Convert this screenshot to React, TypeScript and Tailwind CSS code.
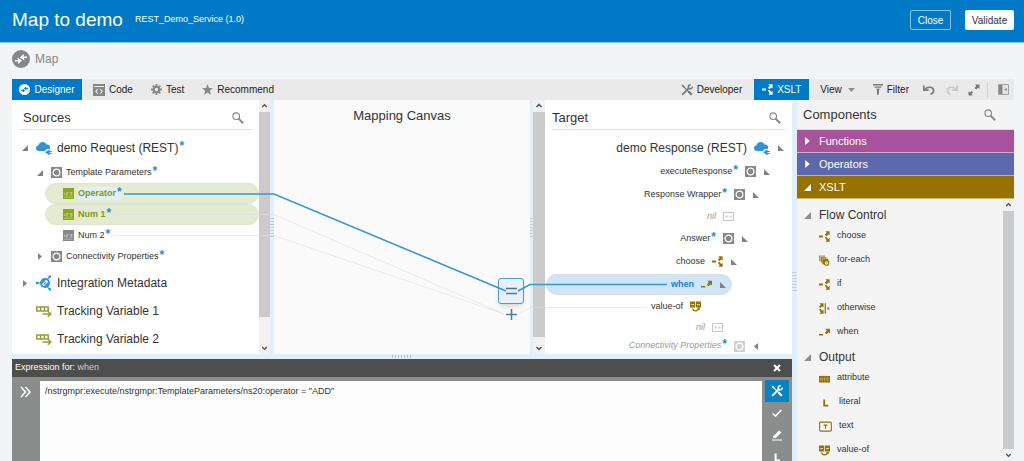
import type { ReactNode } from 'react';
import clsx from 'clsx';

type IconProps = { className?: string };

/* === 图标 === */
function MapIcon({ className }: IconProps) {
  return (
    <svg className={className} viewBox="0 0 18 18" fill="none" aria-hidden="true">
      <circle cx="9" cy="9" r="9" fill="currentColor" />
      <g className="fill-(--mark) stroke-(--mark)" strokeWidth="1.6">
        <path d="M3 10.8H6.5M15 7.2H11.5" />
        <path d="M5.6 7.4L10 10.6L6.4 14ZM12.4 10.6L8 7.4L11.6 4Z" stroke="none" />
      </g>
    </svg>
  );
}

function CodeIcon() {
  return (
    <svg className="h-3 w-3" viewBox="0 0 12 12" fill="none" aria-hidden="true">
      <path d="M0 0H12V12H0Z" fill="#858789" />
      <path d="M1 2.5H11" stroke="#ebebeb" />
      <path d="M4.8 5L2.8 7.3L4.8 9.6M7.2 5L9.2 7.3L7.2 9.6" stroke="#ebebeb" strokeWidth="1.1" />
    </svg>
  );
}

function GearIcon() {
  return (
    <svg className="h-[11px] w-[11px]" viewBox="0 0 12 12" fill="none" stroke="#858789" aria-hidden="true">
      <circle cx="6" cy="6" r="3" strokeWidth="2.4" />
      <path d="M6 0V2.5M6 9.5V12M0 6H2.5M9.5 6H12M1.8 1.8L3.5 3.5M8.5 8.5L10.2 10.2M10.2 1.8L8.5 3.5M3.5 8.5L1.8 10.2" strokeWidth="2" />
    </svg>
  );
}

function StarIcon() {
  return (
    <svg className="h-[11px] w-[11px]" viewBox="0 0 12 12" fill="#858789" aria-hidden="true">
      <path d="M6 0L7.6 4.3L12 4.5L8.5 7.3L9.8 11.8L6 9.2L2.2 11.8L3.5 7.3L0 4.5L4.4 4.3Z" />
    </svg>
  );
}

function ToolsIcon({ className }: IconProps) {
  return (
    <svg className={className} viewBox="0 0 12 12" fill="none" stroke="currentColor" aria-hidden="true">
      <path d="M1.2 1.2L4 4L10.6 10.6" strokeWidth="1.1" />
      <path d="M7.6 7.6L10.8 10.8" strokeWidth="2.2" />
      <path d="M0.8 0.8L3 2L3.4 3.4L2 3Z" fill="currentColor" strokeWidth="0.5" />
      <path d="M1.2 10.8L7.6 4.4" strokeWidth="1.8" />
      <path d="M9.8 0.9A2 2 0 1 0 11.3 2.5" strokeWidth="1.5" />
    </svg>
  );
}

function ChooseIcon({ className }: IconProps) {
  return (
    <svg className={className} viewBox="0 0 12 12" fill="currentColor" aria-hidden="true">
      <path d="M0 5H4.4V7H0ZM7 0.4H11.6V5L10.2 3.7L8.2 5.6L6.4 4.2L8.3 2ZM6.4 7.2L7.8 6.4L10.2 8.6L11.6 7.4V11.8H7L8.4 10.4Z" />
    </svg>
  );
}

function WhenIcon({ className }: IconProps) {
  return (
    <svg className={className} viewBox="0 0 12 12" fill="currentColor" aria-hidden="true">
      <path d="M0 7.6H4.6V9.4H0ZM7 2H12V7L10.5 5.7L8.2 7.8L6.4 6.2L8.4 3.7Z" />
    </svg>
  );
}

function OtherwiseIcon({ className }: IconProps) {
  return (
    <svg className={className} viewBox="0 0 12 12" fill="currentColor" aria-hidden="true">
      <path d="M0.6 0.4H5V4.8L3.7 3.6L1.6 5.4L0 4L2 2ZM0 7.2L1.4 6.4L3.7 8.4L5 7.2V11.6H0.6L2 10.2Z" />
      <path d="M6.2 0.2H7.5V11.8H6.2ZM9 5H11.2V7.2H9Z" />
    </svg>
  );
}

function ForEachIcon({ className }: IconProps) {
  return (
    <svg className={className} viewBox="0 0 12 12" fill="none" aria-hidden="true">
      <path d="M0 0.6H6.6V6.6H0Z" fill="#b39b4a" />
      <path d="M1.6 2.2H8.4V8.4H1.6Z" fill="currentColor" stroke="#f4f4f4" strokeWidth="0.5" />
      <path d="M3.4 4H10.4V10.4H3.4Z" fill="currentColor" stroke="#f4f4f4" strokeWidth="0.5" />
      <circle cx="8.2" cy="8.6" r="2.5" fill="#f4f4f4" stroke="currentColor" strokeWidth="1.2" />
      <path d="M8.2 7.4L9.6 8.6L8 9.6Z" fill="currentColor" />
    </svg>
  );
}

function ValueOfIcon({ className }: IconProps) {
  return (
    <svg className={className} viewBox="0 0 12 12" fill="none" aria-hidden="true">
      <path d="M0 0.6H5.6V7H0ZM6.4 0.6H12V7H6.4Z" fill="currentColor" />
      <path d="M1.2 4H4.4M7.8 4H10.8" stroke="#fff" strokeWidth="0.9" />
      <path d="M2.6 8.2C3.8 11.6 8.4 11.6 9.6 8" stroke="currentColor" strokeWidth="1.4" />
      <path d="M7.4 8.8L10.4 6.6L11 9.8Z" fill="currentColor" />
    </svg>
  );
}

function AttributeIcon({ className }: IconProps) {
  return (
    <svg className={className} viewBox="0 0 12 12" fill="none" aria-hidden="true">
      <path d="M0 3.2H12V10.4H0Z" fill="currentColor" />
      <path d="M1.5 8.5V6H3.5V8.5M5 5.5H7M6 5.5V8.5M10.5 5.5H8.5V8H10.5" stroke="#d6c78e" strokeWidth="0.7" />
    </svg>
  );
}

function LiteralIcon({ className }: IconProps) {
  return (
    <svg className={className} viewBox="0 0 12 12" fill="none" aria-hidden="true">
      <path d="M4.6 2.6V9.4H9" stroke="currentColor" strokeWidth="2" />
    </svg>
  );
}

function TextIcon({ className }: IconProps) {
  return (
    <svg className={className} viewBox="0 0 14 12" fill="none" stroke="currentColor" aria-hidden="true">
      <rect x="0.6" y="1.2" width="12.8" height="9.8" rx="1.2" strokeWidth="1.2" />
      <path d="M5 4.5H9M7 4.5V8.5" strokeWidth="1.2" />
    </svg>
  );
}

function CloudIcon() {
  return (
    <svg className="h-3.5 w-4 shrink-0" viewBox="0 0 16 14" fill="#2f93d6" aria-hidden="true">
      <path d="M3 10C1 10 0 8.8 0 7.2C0 5.6 1 4.7 2.4 4.5C2.8 2.4 4.4 1 6.6 1C8.6 1 10 2 10.6 3.6C12.6 3.4 14.2 4.6 14.2 6.4C14.2 7 14 7.5 13.6 8H10.8L8.8 10Z" />
      <path d="M9.4 10.6H10.8C11.2 9.5 12.2 8.8 13.6 8.8V10H15.8V11H13.6V12H15.8V13H13.6V14C12 14 11.2 13 10.8 12H9.4Z" />
    </svg>
  );
}

function MetadataIcon() {
  return (
    <svg className="h-4 w-4 shrink-0" viewBox="0 0 16 16" fill="none" aria-hidden="true">
      <circle cx="9" cy="8" r="5" fill="#2f93d6" />
      <path d="M1.5 8H5M11.5 4L13.6 1.8M11.5 12L13.6 14.2" stroke="#2f93d6" strokeWidth="1.2" />
      <path d="M0 6.8H2.6V9.2H0ZM12.6 0.4H15V2.8H12.6ZM12.6 13.2H15V15.6H12.6Z" fill="#2f93d6" />
      <path d="M8.6 7.4L6.6 8.8L7.6 10.4L9.4 9.4M9.4 8.6L11.4 7.2L10.4 5.6L8.6 6.6" stroke="#fff" strokeWidth="1.1" />
    </svg>
  );
}

function TrackingIcon() {
  return (
    <svg className="h-3 w-4 shrink-0" viewBox="0 0 16 12" fill="none" aria-hidden="true">
      <path d="M0.8 2H12.2V6H0.8Z" stroke="#9b9c37" strokeWidth="1.5" />
      <path d="M4.6 2V6M8.4 2V6" stroke="#9b9c37" strokeWidth="1.5" />
      <path d="M6.5 9H14M11.8 6.2L14.8 9L11.8 11.8" stroke="#9b9c37" strokeWidth="1.5" />
    </svg>
  );
}

/* 灰色方块内的圆环 = 复合元素 */
function ObjectIcon({ faded }: { faded?: boolean }) {
  return (
    <svg className={clsx('h-[11px] w-[11px] shrink-0', faded ? 'text-[#cfd0d1]' : 'text-[#85878a]')} viewBox="0 0 11 11" fill="none" aria-hidden="true">
      <path d="M0 0H11V11H0Z" fill="currentColor" />
      <circle cx="5.5" cy="5.5" r="3.4" stroke="#fff" strokeWidth="1.2" />
    </svg>
  );
}

function NilIcon() {
  return (
    <svg className="h-[11px] w-[11px] shrink-0" viewBox="0 0 11 11" fill="none" aria-hidden="true">
      <path d="M0.5 1.5H10.5V9.5H0.5Z" stroke="#c4c5c6" />
      <path d="M2.5 4.5H4.5V6.5H2.5ZM6.5 4.5H8.5V6.5H6.5Z" fill="#cbcccd" />
    </svg>
  );
}

function FieldIcon({ className }: IconProps) {
  return (
    <svg className={clsx('h-[11px] w-[11px] shrink-0', className)} viewBox="0 0 11 11" fill="none" aria-hidden="true">
      <path d="M0 0H11V11H0Z" fill="currentColor" />
      <path d="M1.5 7V4.5M3 4.5H5V5.8H3V7.2H5M6.5 4.5H9V7.2H6.5M7 5.8H9M1 9.2H10" stroke="#fff" strokeOpacity="0.5" strokeWidth="0.7" />
    </svg>
  );
}

function SearchIcon() {
  return (
    <svg className="h-3 w-3" viewBox="0 0 12 12" fill="none" stroke="#85878a" aria-hidden="true">
      <circle cx="4.2" cy="4.2" r="3.3" strokeWidth="1.1" />
      <path d="M6.6 6.6L11.2 11.2" strokeWidth="2" />
    </svg>
  );
}

/* === 三角形箭头 === */
function Triangle({ kind, className }: { kind: 'open' | 'closed' | 'left' | 'openRight'; className?: string }) {
  const d = {
    open: 'M6 0V6H0Z',
    closed: 'M1 0L5 3L1 6Z',
    left: 'M5 0L1 3L5 6Z',
    openRight: 'M0 0V6H6Z',
  }[kind];
  const size = kind === 'closed' || kind === 'left' ? 'h-[7px] w-[6px]' : 'h-[6px] w-[6px]';
  return (
    <svg
      className={clsx('shrink-0', className ?? `${size} text-[#7f8183]`)}
      viewBox="0 0 6 6"
      preserveAspectRatio="none"
      fill="currentColor"
      aria-hidden="true"
    >
      <path d={d} />
    </svg>
  );
}

function Star() {
  return <span className="-mt-1 ml-px text-[12px] font-bold not-italic leading-none text-[#1f8dd6]">*</span>;
}

function ScrollBar({ thumb, className }: { thumb: string; className?: string }) {
  return (
    <div className={clsx('flex shrink-0 flex-col bg-[#f1f1f1]', className)} aria-hidden="true">
      <svg className="h-3 w-full" viewBox="0 0 12 12" fill="none" stroke="#505050" strokeWidth="1.5">
        <path d="M3.5 7L6 4.5L8.5 7" />
      </svg>
      <div className="min-h-0 flex-1">
        <div className={clsx('w-full bg-[#cbcbcb]', thumb)} />
      </div>
      <svg className="h-3 w-full" viewBox="0 0 12 12" fill="none" stroke="#505050" strokeWidth="1.5">
        <path d="M3.5 5L6 7.5L8.5 5" />
      </svg>
    </div>
  );
}

function Splitter({ className }: { className: string }) {
  return (
    <div className={clsx('flex shrink-0 items-center justify-center bg-[#e1effa]', className)}>
      <div className="h-5 w-full bg-[repeating-linear-gradient(0deg,#c3ccd3_0_1px,transparent_1px_3px)]" />
    </div>
  );
}

function PanelHead({ title, className }: { title: string; className: string }) {
  return (
    <div className={className}>
      <h2 className="text-[13px]">{title}</h2>
      <button type="button" aria-label={`Search ${title}`}>
        <SearchIcon />
      </button>
    </div>
  );
}

function Tab({ icon, label, active, className }: { icon: ReactNode; label: string; active?: boolean; className: string }) {
  return (
    <button
      type="button"
      className={clsx('flex h-[21px] items-center gap-1 text-[10px]', active ? 'bg-[#007ac7] text-white' : 'text-[#222]', className)}
    >
      {icon}
      {label}
    </button>
  );
}

function SourceLeaf({ label, mapped, picked }: { label: string; mapped?: boolean; picked?: boolean }) {
  return (
    <div
      className={clsx(
        'ml-[33px] flex h-[21px] items-center gap-1 rounded-full text-[9px]',
        mapped ? 'border border-[#dde3d2] bg-[#e3ecd0] pl-[17px] font-bold text-[#7f9718]' : 'pl-[18px]',
      )}
    >
      <FieldIcon className={mapped ? 'text-[#8aa61c]' : 'text-[#85878a]'} />
      <span className={clsx('flex items-center', picked && 'bg-[#e1effa]')}>
        {label}
        <Star />
      </span>
    </div>
  );
}

function SourceGroup({ label, open }: { label: string; open?: boolean }) {
  return (
    <div className="flex h-[21px] items-center pl-[25px] text-[9px]">
      <Triangle kind={open ? 'open' : 'closed'} />
      <span className="ml-2 flex items-center gap-1">
        <ObjectIcon />
        <span className="flex items-center">
          {label}
          <Star />
        </span>
      </span>
    </div>
  );
}

function SourceRoot({ icon, label, arrow, required }: { icon: ReactNode; label: string; arrow?: 'open' | 'closed'; required?: boolean }) {
  return (
    <div className="flex h-7 items-center pl-[10px] text-[12px]">
      {arrow ? <Triangle kind={arrow} /> : <span className="w-[6px]" />}
      <span className="ml-2 flex items-center gap-[5px]">
        {icon}
        <span className="flex items-center">
          {label}
          {required && <Star />}
        </span>
      </span>
    </div>
  );
}

type TargetRowProps = {
  label: string;
  icon: ReactNode;
  className: string;
  arrow?: 'openRight' | 'left';
  required?: boolean;
};

function TargetRow({ label, icon, className, arrow, required }: TargetRowProps) {
  return (
    <div className={clsx('flex items-center justify-end', className)}>
      <span className="mr-[7px] flex items-center">
        {label}
        {required && <Star />}
      </span>
      <span className="flex items-center gap-2">
        {icon}
        {arrow ? <Triangle kind={arrow} /> : <span className="w-[6px]" />}
      </span>
    </div>
  );
}

const iconSize = 'h-[11px] w-[11px] shrink-0 text-[#967200]';

const flowControl = [
  { label: 'choose', icon: ChooseIcon },
  { label: 'for-each', icon: ForEachIcon },
  { label: 'if', icon: ChooseIcon },
  { label: 'otherwise', icon: OtherwiseIcon },
  { label: 'when', icon: WhenIcon },
];

const output = [
  { label: 'attribute', icon: AttributeIcon },
  { label: 'literal', icon: LiteralIcon, wide: true },
  { label: 'text', icon: TextIcon, wide: true },
  { label: 'value-of', icon: ValueOfIcon },
];

function ComponentGroup({ title, items }: { title: string; items: { label: string; icon: (p: IconProps) => ReactNode; wide?: boolean }[] }) {
  return (
    <section>
      <h3 className="flex h-[22px] items-center gap-2 pl-[7px] pt-1 text-[12px]">
        <Triangle kind="open" className="h-[7px] w-[7px] text-[#8b8d8f]" />
        {title}
      </h3>
      <ul>
        {items.map(({ label, icon: Icon, wide }) => (
          <li key={label} className="flex h-6 items-center gap-[7px] pl-[22px] text-[9px]">
            <Icon className={wide ? 'h-[11px] w-[13px] shrink-0 text-[#967200]' : iconSize} />
            {label}
          </li>
        ))}
      </ul>
    </section>
  );
}

function Drawer({ label, color, open }: { label: string; color: string; open?: boolean }) {
  return (
    <button type="button" className={clsx('flex h-[23px] w-full items-center gap-2 border-b border-white/50 pl-[7px] text-[11px] text-white', color)}>
      <Triangle kind={open ? 'open' : 'closed'} className={open ? 'h-[7px] w-[7px]' : 'h-2 w-[7px]'} />
      {label}
    </button>
  );
}

export default function App() {
  return (
    <div className="flex h-screen flex-col overflow-hidden bg-[#f3f4f6] font-['Liberation_Sans',Arial,sans-serif] text-[#333]">
      {/* === 顶栏 === */}
      <header className="flex h-[43px] shrink-0 items-center border-b border-[#8cc3e8] bg-[#007ac7] pb-0.5 pl-3 pr-2.5 text-white">
        <h1 className="text-[19px]">Map to demo</h1>
        <span className="ml-3 text-[9px]">REST_Demo_Service (1.0)</span>
        <div className="ml-auto flex gap-3.5 text-[10px]">
          <button type="button" className="h-5 w-[41px] rounded-[2px] border border-[#8cc3e8]">Close</button>
          <button type="button" className="h-5 w-[49px] rounded-[2px] bg-white text-[#333]">Validate</button>
        </div>
      </header>

      <div className="flex h-9 shrink-0 items-center gap-[5px] pb-1 pl-3 text-[12px] text-[#858789]">
        <MapIcon className="h-[18px] w-[18px] [--mark:#fff]" />
        Map
      </div>

      <main className="ml-3 mr-2.5 flex min-h-0 flex-1 flex-col">
        {/* === 工具栏 === */}
        <div className="flex shrink-0 items-center bg-[#eaeaea]">
          <Tab active label="Designer" className="w-[70px] justify-center" icon={<MapIcon className="h-[11px] w-[11px] [--mark:#007ac7]" />} />
          <Tab label="Code" className="ml-[11px]" icon={<CodeIcon />} />
          <Tab label="Test" className="ml-[18px]" icon={<GearIcon />} />
          <Tab label="Recommend" className="ml-[18px]" icon={<StarIcon />} />
          <Tab label="Developer" className="ml-auto" icon={<ToolsIcon className="h-3 w-3 text-[#77797b]" />} />
          <Tab active label="XSLT" className="ml-3 w-[55px] justify-center" icon={<ChooseIcon className="h-[11px] w-[11px]" />} />
          <button type="button" className="ml-[11px] flex items-center gap-1.5 text-[10px] text-[#222]">
            View
            <svg className="h-1 w-[7px]" viewBox="0 0 7 4" fill="#8b8d8f" aria-hidden="true"><path d="M0 0H7L3.5 4Z" /></svg>
          </button>
          <Tab
            label="Filter"
            className="ml-[18px]"
            icon={
              <svg className="h-[11px] w-2.5" viewBox="0 0 10 11" fill="#77797b" aria-hidden="true">
                <path d="M0 0H10V1.4H0ZM1.2 2.4H8.8L8 3.8H2ZM3 4.8H7L6 6.2V10.2L4 11V6.2Z" />
              </svg>
            }
          />
          <button type="button" aria-label="Undo" className="ml-3.5">
            <svg className="h-2.5 w-3" viewBox="0 0 12 10" fill="none" stroke="#77797b" strokeWidth="1.7" aria-hidden="true">
              <path d="M2 4.4C4.5 1.2 10.6 1.6 10.6 5.4C10.6 7.4 9.4 8.6 7.6 9.2" />
              <path d="M0.9 0.5V5.2H5.6" />
            </svg>
          </button>
          <button type="button" aria-label="Redo" className="ml-[11px]">
            <svg className="h-2.5 w-3" viewBox="0 0 12 10" fill="none" stroke="#c6c7c8" strokeWidth="1.7" aria-hidden="true">
              <path d="M10 4.4C7.5 1.2 1.4 1.6 1.4 5.4C1.4 7.4 2.6 8.6 4.4 9.2" />
              <path d="M11.1 0.5V5.2H6.4" />
            </svg>
          </button>
          <button type="button" aria-label="Maximize" className="ml-2.5">
            <svg className="h-3 w-3" viewBox="0 0 12 12" fill="#77797b" aria-hidden="true">
              <path d="M7 0.5H11.5V5L10.1 3.7L8 5.6L6.5 4.1L8.4 2ZM0.5 11.5V7.2L1.9 8.5L3.6 7L5 8.4L3.5 10.1L4.8 11.5Z" />
            </svg>
          </button>
          <div className="ml-[7px] h-4 border-l border-[#d4d4d4]" />
          <button type="button" aria-label="Toggle components" className="ml-2.5 mr-[5px]">
            <svg className="h-[11px] w-[11px]" viewBox="0 0 11 11" fill="none" aria-hidden="true">
              <path d="M0.5 0.5H10.5V10.5H0.5Z" fill="#e4e4e4" stroke="#a0a2a4" />
              <path d="M1 1H4.5V10H1Z" fill="#85878a" />
              <path d="M6 5.5L8.8 4V7Z" fill="#85878a" />
            </svg>
          </button>
        </div>

        <div className="flex min-h-0 flex-1">
          <div className="flex min-w-0 flex-1 flex-col">
            {/* === 映射区 === */}
            <div className="relative flex shrink-0">
              <section className="w-[247px] shrink-0 bg-white">
                <PanelHead title="Sources" className="ml-2 mr-[7px] flex h-[30px] items-center justify-between border-b border-[#e3e3e3] pl-[3px] pr-2 pt-1.5" />
                <div className="pt-1">
                  <SourceRoot arrow="open" icon={<CloudIcon />} label="demo Request (REST)" required />
                  <SourceGroup open label="Template Parameters" />
                  <SourceLeaf mapped picked label="Operator" />
                  <SourceLeaf mapped label="Num 1" />
                  <SourceLeaf label="Num 2" />
                  <SourceGroup label="Connectivity Properties" />
                  <div className="pt-0.5">
                    <SourceRoot arrow="closed" icon={<MetadataIcon />} label="Integration Metadata" />
                    <SourceRoot icon={<TrackingIcon />} label="Tracking Variable 1" />
                    <SourceRoot icon={<TrackingIcon />} label="Tracking Variable 2" />
                  </div>
                </div>
              </section>
              <ScrollBar className="w-[11px]" thumb="h-[89%]" />
              <Splitter className="w-1" />

              <section className="relative min-w-0 flex-1 bg-[#fafafa]">
                <h2 className="pt-1.5 text-center text-[13px]">Mapping Canvas</h2>
                {/* 运算节点 */}
                <button
                  type="button"
                  aria-label="Equals"
                  className="absolute right-1.5 top-[178px] flex h-[26px] w-[26px] items-center justify-center rounded-[3px] border border-[#4a9ad6] bg-[#e6f1fa] shadow-md"
                >
                  <svg className="h-2 w-[11px]" viewBox="0 0 11 8" stroke="#55719f" strokeWidth="1.6" aria-hidden="true">
                    <path d="M0 1.5H11M0 6.5H11" />
                  </svg>
                </button>
                <button type="button" aria-label="Add" className="absolute right-[13px] top-[209px]">
                  <svg className="h-[11px] w-[11px]" viewBox="0 0 11 11" stroke="#4f79a8" strokeWidth="1.6" aria-hidden="true">
                    <path d="M0 5.5H11M5.5 0V11" />
                  </svg>
                </button>
              </section>

              <Splitter className="w-[3px]" />
              <ScrollBar className="w-3" thumb="h-[98%]" />

              <section className="w-[247px] shrink-0 bg-white text-[9px]">
                <PanelHead title="Target" className="mx-[7px] flex h-[30px] items-center justify-between border-b border-[#e3e3e3] pr-1 pt-1.5" />
                <div className="pt-1">
                  <TargetRow label="demo Response (REST)" icon={<CloudIcon />} arrow="openRight" className="h-[26px] pr-2 pt-0.5 text-[12px]" />
                  <TargetRow label="executeResponse" icon={<ObjectIcon />} arrow="openRight" required className="h-[23px] pr-[22px]" />
                  <TargetRow label="Response Wrapper" icon={<ObjectIcon />} arrow="openRight" required className="h-[23px] pr-[33px]" />
                  <TargetRow label="nil" icon={<NilIcon />} className="h-[21px] pr-11 italic text-[#999]" />
                  <TargetRow label="Answer" icon={<ObjectIcon />} arrow="openRight" required className="h-[23px] pr-11" />
                  <TargetRow label="choose" icon={<ChooseIcon className={iconSize} />} arrow="openRight" className="h-[23px] pr-[55px]" />
                  <TargetRow
                    label="when"
                    icon={<WhenIcon className={iconSize} />}
                    arrow="openRight"
                    className="my-px ml-px mr-[60px] h-[21px] rounded-full border border-[#dcdfe2] bg-[#cfe6fa] pr-[5px] font-bold text-[#1583cc]"
                  />
                  <TargetRow label="value-of" icon={<ValueOfIcon className={iconSize} />} className="h-[21px] pr-[77px]" />
                  <TargetRow label="nil" icon={<NilIcon />} className="h-[21px] pr-[55px] italic text-[#999]" />
                  <TargetRow label="Connectivity Properties" icon={<ObjectIcon faded />} arrow="left" required className="h-4 pr-[33px] italic text-[#999]" />
                </div>
              </section>

              {/* 连线 */}
              <svg className="pointer-events-none absolute inset-0 h-full w-full" viewBox="0 0 780 254" preserveAspectRatio="none" fill="none" aria-hidden="true">
                <path d="M103 114.5H262L492 214M101 135.5H262L492 214M507 214L518 207.5H635" stroke="#d9dfe4" strokeOpacity="0.6" />
                <path d="M112 94H262L494 191M506 191L518 184.5H655" stroke="#3398db" strokeWidth="1.6" />
              </svg>
            </div>

            <div className="flex h-[5px] shrink-0 justify-center bg-[#e1effa] py-px">
              <div className="w-5 bg-[repeating-linear-gradient(90deg,#b9c3cb_0_1px,transparent_1px_3px)]" />
            </div>

            {/* === 表达式编辑 === */}
            <section className="flex min-h-0 flex-1 flex-col bg-[#8b8d8d]">
              <div className="flex h-[18px] shrink-0 items-center justify-between bg-[#4d4d4d] pl-[3px] pr-[11px] text-[9px] text-white">
                <label htmlFor="expression">
                  Expression for: <span className="text-[#ccc]">when</span>
                </label>
                <button type="button" aria-label="Close expression">
                  <svg className="h-2 w-2" viewBox="0 0 8 8" stroke="#fff" strokeWidth="2" aria-hidden="true"><path d="M1 1L7 7M7 1L1 7" /></svg>
                </button>
              </div>
              <div className="flex min-h-0 flex-1">
                <div className="w-7 shrink-0 pl-2 pt-1">
                  <button type="button" aria-label="Expand">
                    <svg className="h-3 w-[11px]" viewBox="0 0 11 12" fill="none" stroke="#fff" strokeWidth="1.5" aria-hidden="true">
                      <path d="M1 1L5.5 6L1 11M5.5 1L10 6L5.5 11" />
                    </svg>
                  </button>
                </div>
                <textarea
                  id="expression"
                  className="mt-1 min-w-0 flex-1 resize-none bg-[#fdfdfd] px-[5px] pt-1 text-[9px] outline-none"
                  spellCheck={false}
                  defaultValue={'/nstrgmpr:execute/nstrgmpr:TemplateParameters/ns20:operator = "ADD"'}
                />
                <div className="flex w-[30px] shrink-0 flex-col items-center pt-[3px]">
                  <button type="button" aria-label="Expression tools" className="flex h-[22px] w-6 shrink-0 items-center justify-center bg-[#0a82c2] text-white">
                    <ToolsIcon className="h-3 w-3" />
                  </button>
                  <button type="button" aria-label="Apply" className="flex h-[22px] w-6 shrink-0 items-center justify-center">
                    <svg className="h-2 w-2.5" viewBox="0 0 10 8" fill="none" stroke="#fff" strokeWidth="1.6" aria-hidden="true"><path d="M0.6 4.5L3.5 7L9.4 1" /></svg>
                  </button>
                  <button type="button" aria-label="Clear" className="flex h-[22px] w-6 shrink-0 items-center justify-center">
                    <svg className="h-[11px] w-2.5" viewBox="0 0 10 11" fill="#fff" aria-hidden="true">
                      <path d="M1 6.5L7 0.5L9.5 2.6L3.8 8H1ZM0 9.4H10V10.6H0Z" />
                    </svg>
                  </button>
                  <button type="button" aria-label="Literal" className="flex h-[22px] w-6 shrink-0 items-center justify-center text-white">
                    <LiteralIcon className="h-3 w-3" />
                  </button>
                </div>
              </div>
            </section>
          </div>

          <Splitter className="w-[5px]" />

          {/* === 组件面板 === */}
          <aside className="flex w-[217px] shrink-0 flex-col bg-[#f4f4f4]">
            <PanelHead title="Components" className="flex h-[30px] shrink-0 items-center justify-between border-b border-[#ddd] pl-1.5 pr-[18px]" />
            <Drawer label="Functions" color="bg-[#a9529c]" />
            <Drawer label="Operators" color="bg-[#5b69ac]" />
            <Drawer open label="XSLT" color="bg-[#967200]" />
            <div className="flex min-h-0 flex-1">
              <div className="flex-1 overflow-hidden pt-[3px]">
                <ComponentGroup title="Flow Control" items={flowControl} />
                <ComponentGroup title="Output" items={output} />
              </div>
              <ScrollBar className="w-[11px]" thumb="h-full" />
            </div>
          </aside>
        </div>
      </main>
    </div>
  );
}
